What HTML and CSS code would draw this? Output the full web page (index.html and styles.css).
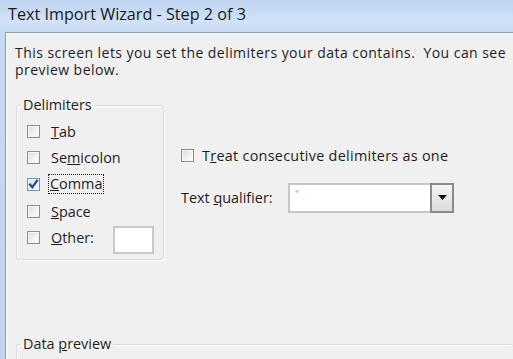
FILE: index.html
```html
<!DOCTYPE html>
<html>
<head>
<meta charset="utf-8">
<link rel="stylesheet" href="styles.css">
</head>
<body>
<div class="window">
  <div class="titlebar">Text Import Wizard - Step 2 of 3</div>
  <div class="frame">
    <p class="intro">This screen lets you set the delimiters your data contains.&nbsp; You can see<br>preview below.</p>
    <div class="middle">
      <fieldset class="group delimiters">
        <legend>Delimiters</legend>
        <div class="rows">
          <div class="row"><span class="cb"></span><span class="lbl"><u>T</u>ab</span></div>
          <div class="row"><span class="cb"></span><span class="lbl">Se<u>m</u>icolon</span></div>
          <div class="row"><span class="cb checked"><svg width="11" height="11" viewBox="0 0 11 11"><path d="M2 5.5 L4.3 8.2 L9 1.8" fill="none" stroke="#21408e" stroke-width="2.1" stroke-linecap="square"/></svg></span><span class="lbl focus"><u>C</u>omma</span></div>
          <div class="row"><span class="cb"></span><span class="lbl"><u>S</u>pace</span></div>
          <div class="row other"><span class="cb"></span><span class="lbl"><u>O</u>ther:</span><span class="textbox"></span></div>
        </div>
      </fieldset>
      <div class="options">
        <div class="row treat"><span class="cb"></span><span class="lbl">T<u>r</u>eat consecutive delimiters as one</span></div>
        <div class="qualifier">
          <span class="qlbl">Text <u>q</u>ualifier:</span>
          <div class="combo"><span class="value">"</span><span class="drop"><svg width="9" height="5" viewBox="0 0 9 5"><path d="M0 0 H9 L4.5 5 Z" fill="#111"/></svg></span></div>
        </div>
      </div>
    </div>
    <fieldset class="group preview">
      <legend>Data <u>p</u>review</legend>
    </fieldset>
  </div>
</div>
</body>
</html>
```
FILE: styles.css
```css
html, body {
  margin: 0;
  padding: 0;
  width: 513px;
  height: 359px;
  overflow: hidden;
}
body {
  font-family: "Open Sans", "Noto Sans", sans-serif;
  color: #1e1e1e;
  background: #c4d9f1;
}
.window {
  display: flex;
  flex-direction: column;
  height: 359px;
  background: linear-gradient(180deg, #bdd4ef 0px, #c9ddf4 14px, #d3e3f6 20px, #c6daf2 32px, #bfd5ee 100%);
}
.titlebar {
  flex: none;
  height: 32px;
  box-sizing: border-box;
  padding: 4px 0 0 8px;
  font-size: 16.2px;
  line-height: 20px;
  color: #1a1a1a;
}
.frame {
  flex: 1;
  min-height: 0;
  overflow: hidden;
  margin-left: 5px;
  background: #f0f0f0;
  border-top: 1px solid #8e9bab;
  border-left: 1px solid #8e9bab;
  box-shadow: inset 1px 1px 0 #ffffff;
}
.intro {
  margin: 0;
  padding: 11px 0 0 9px;
  line-height: 17px;
  white-space: nowrap;
  font-size: 14px;
  letter-spacing: 0.45px;
}
.middle {
  display: flex;
  margin-top: 19px;
}
.group {
  margin: 0;
  border: 1px solid #d5dbe0;
  border-radius: 3px;
  box-shadow: inset 1px 1px 0 #ffffff, 1px 1px 0 #ffffff;
  padding: 0;
}
.group legend {
  padding: 0 2px;
  margin-left: 4px;
  font-size: 14.4px;
  line-height: 16px;
}
.delimiters {
  margin-left: 10px;
  width: 148px;
  box-sizing: border-box;
  height: 163px;
  flex: none;
}
.rows {
  padding: 5px 0 0 10px;
}
.row {
  display: flex;
  align-items: center;
  height: 26.6px;
}
.cb {
  width: 11px;
  height: 11px;
  border: 1px solid #8f8f8f;
  background: linear-gradient(135deg, #dcdcdc 0%, #f4f4f4 60%, #fdfdfd 100%);
  box-shadow: inset 0 0 0 1px #f6f6f6;
  flex: none;
  display: flex;
  align-items: center;
  justify-content: center;
}
.cb.checked {
  background: linear-gradient(135deg, #cfe4fa 0%, #e6f1fc 60%, #f4f9fe 100%);
  border-color: #7c8fa8;
}
.lbl {
  margin-left: 10px;
  font-size: 14.4px;
  line-height: 17px;
  padding: 0 1px;
  white-space: nowrap;
}
.lbl.focus {
  margin-left: 8px;
  padding: 1px 2px 2px 2px;
  outline: 1px dotted #222;
  outline-offset: -1px;
}
.other .textbox {
  margin: 4px 0 0 18px;
  width: 37px;
  height: 24px;
  border: 2px solid #c9c9c9;
  background: #fff;
  flex: none;
}
.options {
  margin-left: 17px;
  padding-top: 45px;
}
.treat .lbl {
  margin-left: 7px;
  letter-spacing: 0.28px;
}
.qualifier {
  display: flex;
  align-items: center;
  margin-top: 14px;
  margin-left: 0;
}
.qlbl {
  font-size: 14.4px;
  white-space: nowrap;
  width: 107px;
}
.combo {
  display: flex;
  width: 166px;
  height: 30px;
  box-sizing: border-box;
  border: 2px solid #c6c6c6;
  background: #fff;
}
.combo .value {
  flex: 1;
  color: #9a9a9a;
  font-size: 10px;
  padding: 2px 0 0 5px;
}
.combo .drop {
  width: 20px;
  background: linear-gradient(180deg, #f4f4f4, #dcdcdc);
  margin: -2px -2px -2px 0;
  border: 2px solid #8a8a8a;
  display: flex;
  align-items: center;
  justify-content: center;
}
.preview {
  margin: 76px 0 0 10px;
  height: 40px;
  border-right: none;
}
```
